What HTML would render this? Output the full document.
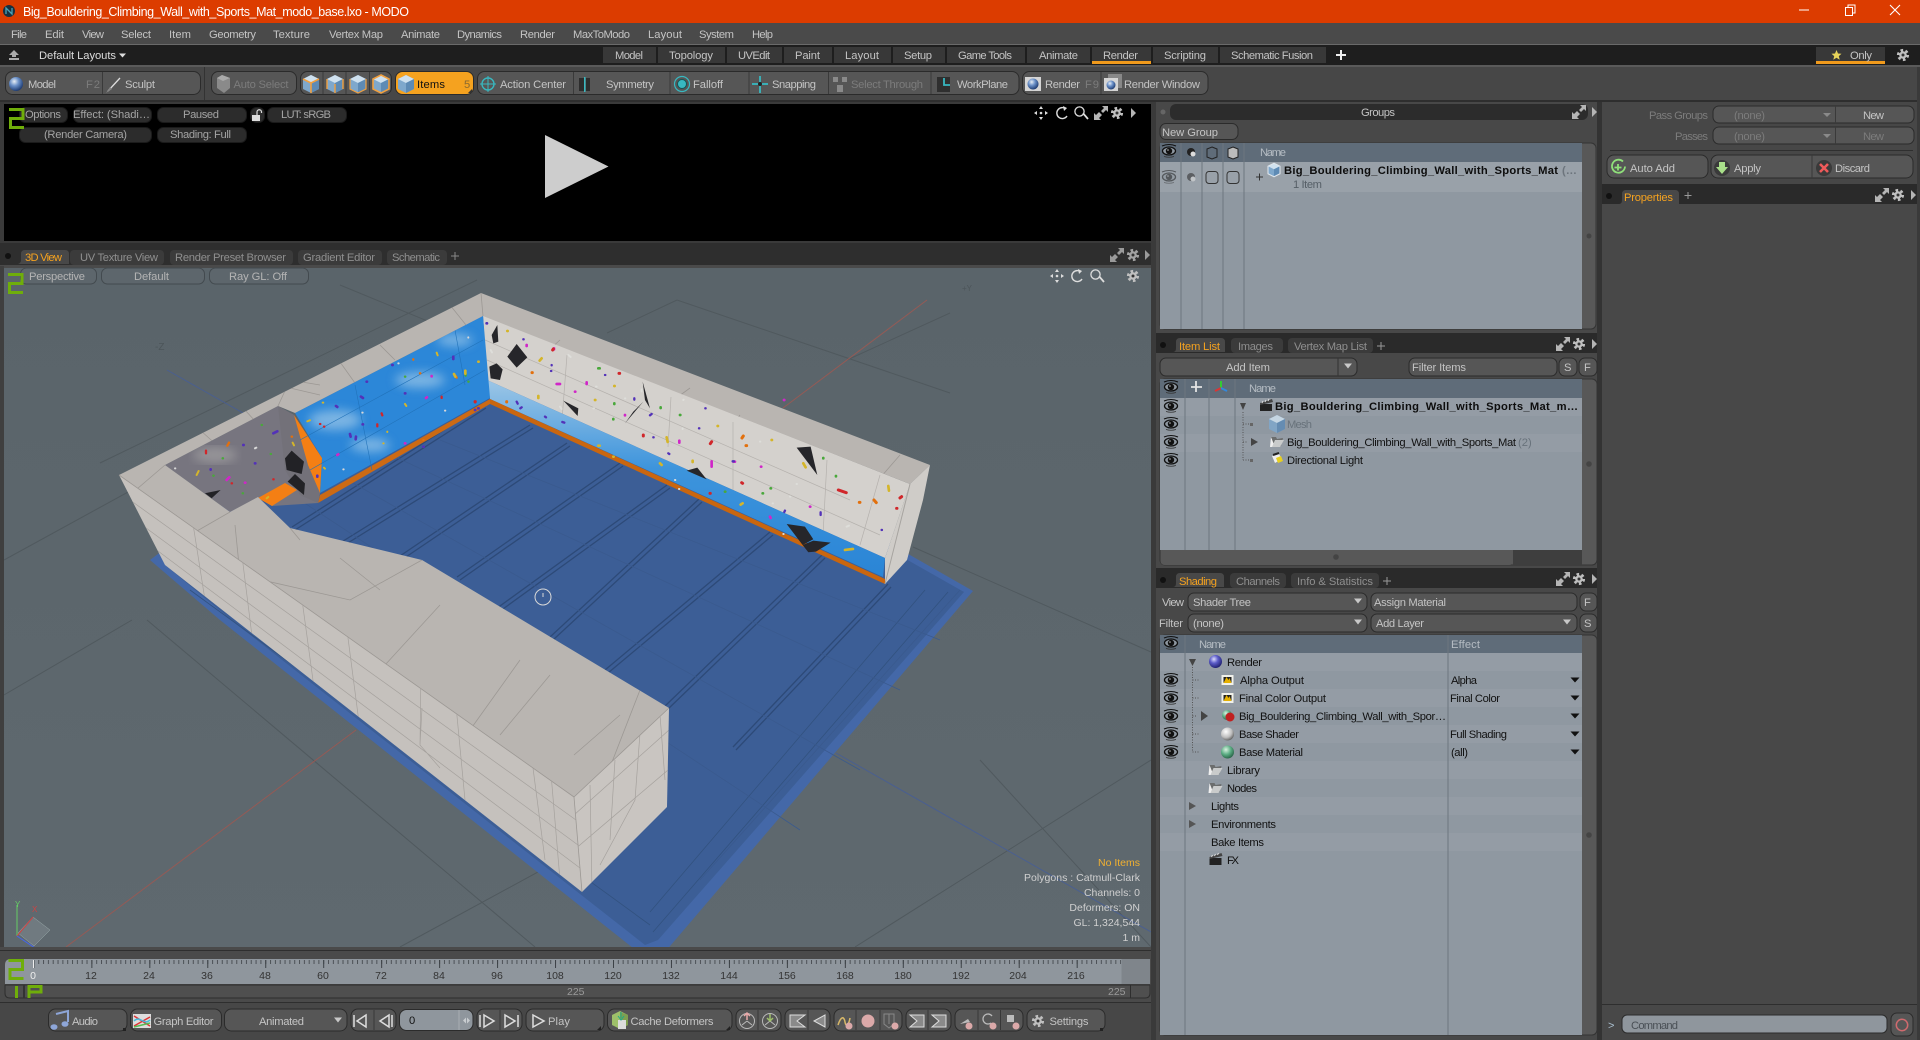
<!DOCTYPE html>
<html lang="en"><head><meta charset="utf-8"><title>Big_Bouldering_Climbing_Wall_with_Sports_Mat_modo_base.lxo - MODO</title>
<style>
html,body{margin:0;padding:0;background:#484848;overflow:hidden}
svg{display:block}
text{font-family:"Liberation Sans",sans-serif;font-size:11.2px;fill:#c4c4c4;white-space:pre}
.d{fill:#111}.g{fill:#8f8f8f}.h{fill:#7c7c7c}.o{fill:#f5a21f}.s{font-size:10.5px;fill:#d0d0d0}
.b{fill:#565656;stroke:#2b2b2b}.p{fill:#2c2c2c;stroke:#1b1b1b}.v{fill:#5d666c;stroke:#434a4f}
.tb{fill:#383838}.ln{stroke:#333;stroke-width:1}
</style></head><body>
<svg width="1920" height="1040" viewBox="0 0 1920 1040" xmlns="http://www.w3.org/2000/svg">
<defs>
<g id="eye"><ellipse rx="6.500" ry="4" fill="#8f98a1" stroke="#111" stroke-width="1.300"/><circle r="3.200" fill="#111"/><circle cx="-1" cy="-1" r=".8" fill="#bbb"/><path d="M-7-5q7-3 14 0" fill="none" stroke="#111"/><path d="M-5 5.500q5 1.500 10 0" fill="none" stroke="#333" stroke-width=".7"/></g>
<g id="gear"><circle r="3.800" fill="#c0c0c0"/><circle r="4.800" fill="none" stroke="#c0c0c0" stroke-width="2.600" stroke-dasharray="2.600 2.400"/><circle r="1.500" fill="#333"/></g>
<g id="exp"><path d="M-7 7v-7l2 2 3-3 3 3-3 3 2 2zM7-7v6l-2-2-3 3-2-2 3-3-2-2z" fill="#b5b5b5"/></g>
<path id="arr" d="M-2-5 3 0-2 5z" fill="#b5b5b5"/>
<g id="cube"><path d="M0-9 8-5V5L0 9-8 5V-5z" fill="#7fa8cc"/><path d="M0-9 8-5 0-1-8-5z" fill="#cfe1ef"/><path d="M0-1V9L8 5V-5z" fill="#5e8bb5"/></g>
<g id="cubeo"><use href="#cube"/><path d="M0-9 8-5V5L0 9-8 5V-5z" fill="none" stroke="#f0a040" stroke-width="1.600"/></g>
<g id="move"><path d="M0-7l2 3h-4zM0 7l2-3h-4zM-7 0l3-2v4zM7 0l-3-2v4z" fill="#ddd"/><circle r="1.300" fill="#ddd"/></g>
<g id="rot"><path d="M4-4A5.500 5.500 0 1 0 5 3" fill="none" stroke="#ddd" stroke-width="1.400"/><path d="M1-7l4 2-3 3z" fill="#ddd"/></g>
<g id="zm"><circle cx="-1.500" cy="-1.500" r="4.600" fill="none" stroke="#ddd" stroke-width="1.300"/><path d="M2 .2 7 6" stroke="#ddd" stroke-width="1.800"/></g>
<path id="two" d="M0 1.500H14V10.500H1.500V19.500H15" fill="none" stroke="#6fae0a" stroke-width="3"/>
<path id="dn" d="M-4-2.500H4L0 2.500z" fill="#c8c8c8"/>
<path id="dnk" d="M-4.500-2.500H4.500L0 2.500z" fill="#111"/>
<g id="folder"><path d="M-6-5h5l1 2 6-1-2 8H-6z" fill="#6b6d6d"/><path d="M-6-5-2 5H-7z" fill="#eee"/><path d="M-5 5-2-2H7L3 5z" fill="#c9cbcb"/></g>
<g id="clap"><rect x="-6" y="-2" width="12" height="7" fill="#222"/><path d="M-6-3 6-7 7-4-6-1z" fill="#444"/><path d="M-4-3-3-5M-1-4 0-6M2-5 3-7" stroke="#ddd"/></g>
<g id="film"><rect x="-6" y="-5" width="12" height="10" fill="#f1f1ea"/><rect x="-4" y="-3" width="8" height="6" fill="#222"/><path d="M-4 3-1-3 1 0 2-2 4 3z" fill="#e6b000"/></g>
<radialGradient id="sp" cx=".38" cy=".32" r=".7"><stop offset="0" stop-color="#e8eef5"/><stop offset=".45" stop-color="#6a90c8"/><stop offset="1" stop-color="#1d3a70"/></radialGradient>
<radialGradient id="spv" cx=".38" cy=".32" r=".7"><stop offset="0" stop-color="#dcdcff"/><stop offset=".45" stop-color="#5c5cc8"/><stop offset="1" stop-color="#202070"/></radialGradient>
<radialGradient id="spw" cx=".38" cy=".32" r=".75"><stop offset="0" stop-color="#fff"/><stop offset=".6" stop-color="#bdbdbd"/><stop offset="1" stop-color="#555"/></radialGradient>
<radialGradient id="spg" cx=".38" cy=".32" r=".75"><stop offset="0" stop-color="#d8f0e0"/><stop offset=".5" stop-color="#5cae84"/><stop offset="1" stop-color="#235a40"/></radialGradient>
<linearGradient id="bg3" x1="0" y1="0" x2="0" y2="1"><stop offset="0" stop-color="#5a646a"/><stop offset="1" stop-color="#5f696f"/></linearGradient>
<linearGradient id="strip" x1="0" y1="0" x2="0" y2="1"><stop offset="0" stop-color="#9cc6e6"/><stop offset=".45" stop-color="#3d94dc"/><stop offset="1" stop-color="#2a85d6"/></linearGradient>
<clipPath id="vp"><rect x="4" y="268" width="1147" height="679"/></clipPath>
<clipPath id="bw"><path d="M483 316 295 413 322 458 320 493 490 398z"/></clipPath>
<clipPath id="gw"><path d="M165 465 278 406 320 493 318 503 272 506 258 498 230 512z"/></clipPath>
<clipPath id="sd"><path d="M119 475 574 797 582 892 165 565z"/></clipPath>
<clipPath id="ef"><path d="M574 797 669 708 667 807 582 892z"/></clipPath>
<clipPath id="cp"><path d="M481 293 930 465 910 484 483 316 295 413 278 406 165 465 230 512 258 497 290 528 422 560 669 708 574 797 119 475z"/></clipPath>
<clipPath id="ww"><path d="M483 315 910 484 885 558 487 380z"/></clipPath>
<filter id="bl"><feGaussianBlur stdDeviation="5"/></filter>
<filter id="sf"><feGaussianBlur stdDeviation=".35"/></filter>
</defs>

<!-- base -->
<rect width="1920" height="1040" fill="#484848"/>
<!-- title bar -->
<rect width="1920" height="23" fill="#dc3c00"/>
<circle cx="9" cy="11" r="6" fill="#17303f"/><path d="M6 14V8l6 6V8" fill="none" stroke="#4aa3b8" stroke-width="1.300"/>
<text x="23" y="16" textLength="386" style="font-size:12.500px;fill:#fff">Big_Bouldering_Climbing_Wall_with_Sports_Mat_modo_base.lxo - MODO</text>
<path d="M1799 10h10" stroke="#fff"/><path d="M1845.500 7.500h7v8h-7zM1848 7.500v-2.500h7v8h-2.500" fill="none" stroke="#fff"/><path d="M1890 5l10 10M1900 5l-10 10" stroke="#fff" stroke-width="1.100"/>
<!-- menu -->
<rect y="23" width="1920" height="21" fill="#4a4a4a"/><rect y="44" width="1920" height="1" fill="#6a6a6a"/>
<g>
<text x="11" y="38" textLength="16">File</text><text x="45" y="38" textLength="19">Edit</text><text x="82" y="38" textLength="22">View</text><text x="121" y="38" textLength="30">Select</text><text x="169" y="38" textLength="22">Item</text><text x="209" y="38" textLength="47">Geometry</text><text x="273" y="38" textLength="37">Texture</text><text x="329" y="38" textLength="54">Vertex Map</text><text x="401" y="38" textLength="39">Animate</text><text x="457" y="38" textLength="45">Dynamics</text><text x="520" y="38" textLength="35">Render</text><text x="573" y="38" textLength="57">MaxToModo</text><text x="648" y="38" textLength="34">Layout</text><text x="699" y="38" textLength="35">System</text><text x="752" y="38" textLength="21">Help</text>
</g>
<!-- layout bar -->
<rect y="45" width="1920" height="20" fill="#1e1e1e"/><rect y="65" width="1920" height="2" fill="#5a5a5a"/>
<path d="M14 50l5 5h-3v2h-4v-2H9zM9 58h10v2H9z" fill="#aaa"/>
<text x="39" y="59" textLength="77" style="fill:#ddd">Default Layouts</text><path d="M119 53.500h7l-3.500 4z" fill="#ddd"/>
<g class="tb">
<rect x="603" y="47" width="53" height="16"/><rect x="658" y="47" width="67" height="16"/><rect x="727" y="47" width="55" height="16"/><rect x="784" y="47" width="48" height="16"/><rect x="834" y="47" width="57" height="16"/><rect x="893" y="47" width="52" height="16"/><rect x="947" y="47" width="78" height="16"/><rect x="1027" y="47" width="63" height="16"/><rect x="1092" y="47" width="59" height="16"/><rect x="1153" y="47" width="65" height="16"/><rect x="1220" y="47" width="106" height="16"/><rect x="1816" y="47" width="69" height="16"/>
</g>
<rect x="1092" y="61" width="59" height="3" fill="#f09a1c"/><rect x="1816" y="61" width="69" height="3" fill="#f09a1c"/>
<g>
<text x="615" y="59" textLength="28">Model</text><text x="669" y="59" textLength="44">Topology</text><text x="738" y="59" textLength="32">UVEdit</text><text x="795" y="59" textLength="25">Paint</text><text x="845" y="59" textLength="34">Layout</text><text x="904" y="59" textLength="28">Setup</text><text x="958" y="59" textLength="54">Game Tools</text><text x="1039" y="59" textLength="39">Animate</text><text x="1103" y="59" textLength="35">Render</text><text x="1164" y="59" textLength="42">Scripting</text><text x="1231" y="59" textLength="82">Schematic Fusion</text>
<text x="1850" y="59" textLength="22">Only</text>
</g>
<path d="M1341 50v10M1336 55h10" stroke="#eee" stroke-width="2"/>
<path d="M1836.500 50l1.500 3.500 3.500.300-2.700 2.300.9 3.600-3.200-2-3.200 2 .9-3.600-2.700-2.300 3.500-.300z" fill="#e6d35a"/>
<use href="#gear" x="1903" y="55"/>
<!-- toolbar -->
<rect y="67" width="1920" height="33" fill="#474747"/><rect y="100" width="1920" height="2" fill="#2e2e2e"/>
<rect x="204" y="67" width="1" height="33" fill="#333"/>
<rect class="b" x="5.500" y="71.500" width="195" height="23" rx="7"/>
<rect x="102" y="72" width="1" height="22" fill="#3a3a3a"/>
<circle cx="16" cy="84" r="7" fill="url(#sp)"/>
<text x="28" y="88" textLength="28">Model</text><text x="86" y="88" textLength="14" class="h">F2</text>
<path d="M108 91l12-13" stroke="#ddd" stroke-width="1.300"/><path d="M106 93l4-6 2 2z" fill="#888"/>
<text x="125" y="88" textLength="30">Sculpt</text>
<rect class="b" x="211.500" y="71.500" width="85" height="23" rx="7"/>
<path d="M222 75l8 3v10l-6 5-7-5V78z" fill="#8a8a8a"/><path d="M222 75l8 3-7 3-6-3z" fill="#aaa"/>
<text x="233.500" y="88" textLength="55" class="h">Auto Select</text>
<rect class="b" x="300.500" y="71.500" width="91" height="23" rx="7"/>
<path d="M323 72v22M346 72v22M369.500 72v22" stroke="#3a3a3a"/>
<use href="#cube" x="311" y="84"/><path d="M303 79l8 4 8-4M311 83v10" fill="none" stroke="#f0a040" stroke-width="1.600"/>
<use href="#cube" x="335" y="84"/><path d="M327 79v10M343 79v10M335 84v9" fill="none" stroke="#f0a040" stroke-width="1.400"/>
<use href="#cube" x="358" y="84"/><path d="M350 79v10l8 4 8-4V79" fill="none" stroke="#f0a040" stroke-width="1.200"/>
<use href="#cubeo" x="381" y="84"/>
<rect x="395.500" y="71.500" width="78" height="23" rx="7" fill="#f5a21f" stroke="#2b2b2b"/>
<use href="#cube" x="406" y="84"/>
<text x="417" y="88" textLength="28" class="d">Items</text><text x="464" y="88" textLength="6" style="fill:#8a6a30">5</text>
<path d="M472 93v-4l-4 4z" fill="#333"/>
<rect class="b" x="477.500" y="71.500" width="541.500" height="23" rx="7"/>
<path d="M573.500 72v22M670 72v22M749 72v22M828.500 72v22M931 72v22" stroke="#3a3a3a"/>
<circle cx="488" cy="84" r="6" fill="none" stroke="#38b8c0" stroke-width="1.400"/><path d="M488 76v16M480 84h16" stroke="#38b8c0"/>
<text x="500" y="88" textLength="66">Action Center</text>
<rect x="579" y="78" width="5" height="13" fill="#2d2d2d"/><rect x="584" y="77" width="1.500" height="15" fill="#38b8c0"/><rect x="586" y="78" width="4" height="13" fill="#2d2d2d"/>
<text x="606" y="88" textLength="48">Symmetry</text>
<circle cx="682" cy="84" r="7.500" fill="none" stroke="#38b8c0" stroke-width="1.200"/><circle cx="682" cy="84" r="4.500" fill="#38b8c0" stroke="#155" stroke-width="1"/>
<text x="693" y="88" textLength="30">Falloff</text>
<path d="M752 84h16" stroke="#38b8c0" stroke-width="1.800"/><path d="M760 76v17" stroke="#38b8c0" stroke-width="1.800"/><circle cx="760" cy="84" r="2" fill="#222"/>
<text x="772" y="88" textLength="44">Snapping</text>
<path d="M833 77h5v5h-5zM842 77h5v5h-5zM837 85h6v7h-6z" fill="#8a8a8a"/>
<text x="851" y="88" textLength="72" class="h">Select Through</text>
<rect x="937" y="77" width="13" height="15" fill="#2f2f2f"/><path d="M944 78v7h6" fill="none" stroke="#38b8c0" stroke-width="1.800"/>
<text x="957" y="88" textLength="51">WorkPlane</text>
<rect class="b" x="1022.500" y="71.500" width="185.500" height="23" rx="7"/>
<path d="M1101 72v22" stroke="#3a3a3a"/>
<rect x="1025" y="77" width="16" height="14" fill="#d5d5d5"/><circle cx="1033" cy="84" r="5.500" fill="url(#sp)"/>
<text x="1045" y="88" textLength="35">Render</text><text x="1085" y="88" textLength="14" class="h">F9</text>
<rect x="1108" y="74" width="14" height="14" fill="#888"/><rect x="1104" y="78" width="14" height="13" fill="#d5d5d5"/><circle cx="1111" cy="85" r="4.500" fill="url(#sp)"/>
<text x="1124" y="88" textLength="76">Render Window</text>

<!-- render preview -->
<rect x="0" y="102" width="1156" height="146" fill="#3a3a3a"/>
<rect x="4" y="104" width="1147" height="137" fill="#000"/>
<g>
<rect class="p" x="19.500" y="107.500" width="48" height="15" rx="6"/><rect class="p" x="73.500" y="107.500" width="78" height="15" rx="6"/><rect class="p" x="157.500" y="107.500" width="89" height="15" rx="6"/><rect class="p" x="250.500" y="107.500" width="14" height="15" rx="6"/><rect class="p" x="267.500" y="107.500" width="79" height="15" rx="6"/><rect class="p" x="19.500" y="127.500" width="132" height="15" rx="6"/><rect class="p" x="157.500" y="127.500" width="89" height="15" rx="6"/>
</g>
<path d="M252 115h8v6h-8z" fill="#ddd"/><path d="M257 115v-3a2.200 2.200 0 0 1 4.500 0v1" fill="none" stroke="#ddd" stroke-width="1.200"/>
<text x="25" y="118" textLength="36" style="fill:#a4a4a4">Options</text><text x="73" y="118" textLength="77" style="fill:#a4a4a4">Effect: (Shadi…</text><text x="183" y="118" textLength="36" style="fill:#a4a4a4">Paused</text><text x="281" y="118" textLength="50" style="fill:#a4a4a4">LUT: sRGB</text><text x="44" y="138" textLength="83" style="fill:#a4a4a4">(Render Camera)</text><text x="170" y="138" textLength="61" style="fill:#a4a4a4">Shading: Full</text>
<use href="#two" x="9" y="108"/>
<path d="M545 135 608.500 166.500 545 198z" fill="#cdcdcd"/>
<use href="#move" x="1041" y="113"/><use href="#rot" x="1062" y="113"/><use href="#zm" x="1081" y="113"/><use href="#exp" x="1101" y="113"/><use href="#gear" x="1117" y="113"/><use href="#arr" x="1133" y="113"/>

<!-- 3D tab bar -->
<rect x="0" y="243" width="1156" height="23" fill="#2e2e2e"/>
<circle cx="8" cy="256" r="3" fill="#111"/>
<path d="M18 264q3-1 3-4v-6q0-4 4-4h40q4 0 4 4v10z" fill="#484848"/>
<g fill="#3b3b3b"><rect x="70" y="250" width="94" height="15" rx="4"/><rect x="170" y="250" width="123" height="15" rx="4"/><rect x="298" y="250" width="84" height="15" rx="4"/><rect x="387" y="250" width="60" height="15" rx="4"/></g>
<text x="25" y="261" textLength="37" class="o">3D View</text><text x="80" y="261" textLength="78" class="g">UV Texture View</text><text x="175" y="261" textLength="111" class="g">Render Preset Browser</text><text x="303" y="261" textLength="72" class="g">Gradient Editor</text><text x="392" y="261" textLength="48" class="g">Schematic</text>
<path d="M455 252v8M451 256h8" stroke="#888"/>
<g opacity=".8"><use href="#exp" x="1117" y="255"/><use href="#gear" x="1133" y="255"/><use href="#arr" x="1147" y="255"/></g>
<rect x="0" y="265" width="1156" height="3" fill="#4a4a4a"/>

<!-- 3D viewport -->
<rect x="0" y="266" width="4" height="684" fill="#3f3f3f"/><rect x="1151" y="266" width="5" height="684" fill="#3f3f3f"/>
<g clip-path="url(#vp)">
<rect x="4" y="268" width="1147" height="679" fill="url(#bg3)"/>
<g stroke="#50595e" fill="none" stroke-width="1">
<path d="M100 463 477 280M147 620 535 947M132 620 4 695M677 300 950 393M607 333 677 300M913 547 1151 652M847 360 950 313M980 760 1151 947M340 285 600 392M4 560 150 480M400 947 560 860M855 947 1151 760"/>
</g>
<path d="M783 408 927 300M356 730 66 947" stroke="#955a55" fill="none"/>
<path d="M167 370 243 413M836 753 1151 932" stroke="#4a5f90" fill="none"/>
<text x="155" y="350" style="fill:#4c5559;font-size:10px">-Z</text>
<text x="962" y="291" style="fill:#4c5559;font-size:8px">+Y</text>

<!-- mat -->
<path d="M150 560 220 620 638 952H665L973 591 481 310z" fill="#4468a8"/>
<path d="M165 565 235 623 645 945 658 940 964 592 481 318z" fill="#3c5e96"/>
<path d="M190 590 650 925M948 592 653 932M925 590 650 912" stroke="#32527f" fill="none" stroke-width=".8"/>
<g stroke="#2d4a78" fill="none" stroke-width="1.300">
<path d="M292 527 483 405M295 530 486 408M340 543 530 425M343 546 533 428M397 558 567 443M400 561 570 446M457 577 620 463M460 580 623 466M482 619 667 485M485 622 670 488M550 637 699 499M553 640 702 502M605 670 770 532M608 673 773 535M664 707 822 555M667 710 825 558M733 747 888 584M736 750 891 587"/>
</g>
<g stroke="#3a5a8e" fill="none" stroke-width=".8"><path d="M330 470 860 770M300 500 800 830M380 450 900 690M440 440 940 640M700 880 960 590"/></g>

<!-- white wall -->
<path d="M483 315 910 484 885 558 487 380z" fill="#d4d1cd"/>
<path d="M487 380 885 558 883 577 490 399z" fill="url(#strip)"/>
<path d="M490 399 885 579 885 584 490 404z" fill="#c9660f"/>
<!-- blue wall -->
<path d="M483 316 295 413 322 458 320 493 490 398z" fill="#2c87d8"/>
<g clip-path="url(#bw)" filter="url(#bl)" fill="#8fc0e6" opacity=".8"><ellipse cx="335" cy="420" rx="26" ry="10"/><ellipse cx="420" cy="380" rx="25" ry="8"/><ellipse cx="370" cy="445" rx="20" ry="7"/><ellipse cx="455" cy="340" rx="18" ry="6"/></g>
<path d="M490 399 320 495 318 503 490 404z" fill="#cc6a14"/>
<!-- gray wall -->
<path d="M165 465 278 406 294 415 320 493 318 503 272 506 258 498 230 512z" fill="#77757f"/>
<g clip-path="url(#gw)" filter="url(#bl)" fill="#9e9c9f" opacity=".8"><ellipse cx="215" cy="455" rx="22" ry="8"/></g>
<path d="M258 498 285 483 297 490 272 506z" fill="#f47f14"/>
<path d="M294 415 320 493 318 503 300 495 285 470 278 406z" fill="#737179"/>
<path d="M294 415 322 458 320 493 308 465z" fill="#f47f14"/>

<!-- wire lines on walls -->
<g stroke="#9b9894" fill="none" stroke-width=".7" opacity=".55" clip-path="url(#ww)">
<path d="M567 355 562 420M671 397 668 447M733 422 733 502M827 460 823 535M880 475 860 545M485 340 850 500M487 360 880 535"/>
</g>
<g stroke="#2172b9" fill="none" stroke-width=".6"><path d="M300 440 483 340M310 470 485 370M455 330 465 385M355 385 372 470"/></g>

<!-- holds: crop 8 -->
<g transform="translate(100 280) scale(.3333)" fill="none" stroke-linecap="round" filter="url(#sf)">
<path d="M622 424l8-3M668 368h2M915 372l4 6M1010 218l3 8M862 455v1M850 490h1M672 563l3 3M578 488l4 8M290 585l6-12M500 655l5-4" stroke="#d4b52a" stroke-width="6"/>
<path d="M708 378l4 3M783 350l6 4M788 433h1M750 462l2 8M768 470l-1 8M877 255h1M800 305h1M1060 230v7M1125 390h1M1160 130h1M652 587v3M915 340h1M520 460l12-6M332 568v1M465 550h1M430 495h1M970 500h1M1135 385h1" stroke="#5230b8" stroke-width="8"/>
<path d="M845 400l2 6M832 433v6M1025 350v4M1125 367h1M318 512v8M520 598h1M660 432h1M672 440h1M395 610h1" stroke="#d0282c" stroke-width="7"/>
<path d="M712 525l3-2M978 354l3-2M995 288v1M380 600l8-8M435 608h1M915 490h1" stroke="#d028c8" stroke-width="8"/>
<path d="M940 238v1M1067 288l3 5M960 280h1M382 497l5-9M970 480h1M575 470h1" stroke="#e26f10" stroke-width="7"/>
<path d="M1097 280v7M485 435h1M368 535h1M340 587h1M428 640h1M512 522h1M915 290h1M1105 305h1" stroke="#48a83a" stroke-width="7"/>
<path d="M1105 172v1M730 568h1M465 505l4-2M225 565h1M787 398h1M895 250h1M1035 392h1" stroke="#d8d8d8" stroke-width="6"/>
<path d="M555 535 575 512 612 545 605 582 560 570zM563 605 585 582 615 610 612 645zM315 640 362 630 335 655z" fill="#232326"/>
</g>
<!-- holds: crop 9 -->
<g transform="translate(450 300) scale(.3333)" fill="none" stroke-linecap="round" filter="url(#sf)">
<path d="M200 132 232 172 200 203 172 170zM125 105 142 75 145 125 130 130zM118 200 140 190 158 208 150 240 122 235zM340 302 385 325 383 348zM578 245 600 325 585 300zM580 305 525 370 550 335zM1040 443 1082 440 1102 525zM710 512 742 503 770 538zM1010 672 1065 680 1090 718 1058 735zM1058 735 1090 722 1142 728 1098 755 1075 757z" fill="#28282a"/>
<path d="M172 93h1M275 175l-6 7M265 288v6M493 258h1M728 486v-4M650 412l3 14M803 378h1M965 420h1M1060 490l7 12M1315 558l2 14M490 470h1M630 490l5 5M878 610l-6 4M1185 750l24-3M445 437h4M435 300h1M12 222l4 8M46 212v9M85 185h1" stroke="#d4b52a" stroke-width="8"/>
<path d="M230 135v3M312 145v3M410 247v5M320 252h10M785 484v16M850 485h5M688 422v6M375 275h1M933 500h1M960 650l2 4M1002 300h1M1080 620h1M525 345v1" stroke="#d028c8" stroke-width="8"/>
<path d="M110 70h1M220 118h1M305 195v1M303 213h1M465 225h1M553 295v4M605 342l-5 4M766 325h1M747 385h1M610 412h1M1005 632l-2 4M1112 637v8M1295 690h1M337 366l6 2M285 350l3 2M215 322l-4 3M200 305l3 6M655 460l3 2M848 484h4" stroke="#5230b8" stroke-width="7"/>
<path d="M310 147l-2 3M507 220h2M580 405v3M785 425l-4 6M875 548l3 2M1165 570l24 8M1355 590l-5 4M780 580h1M1340 625h1M75 305h1" stroke="#d0282c" stroke-width="9"/>
<path d="M246 218h1M880 408l-4 6M888 437h2M1228 607h2M1272 600l7 8M170 305v1" stroke="#e26f10" stroke-width="9"/>
<path d="M445 205h4M632 322v2M493 310v2M490 357v1M690 345h1M1120 474v1M1158 528v1M962 565h1M938 580h1M825 575h1" stroke="#48a83a" stroke-width="8"/>
<path d="M122 150l4 7M355 165l7 6M330 320l5 7M438 260h2M525 295h1M575 268v6M700 300l1-1M698 385v2M930 425h1M1040 552h1M1020 590h1M968 610h1M1190 680l7-3M675 540h1M687 567h1M430 325h2M1000 702h1" stroke="#dededa" stroke-width="6"/>
</g>

<!-- cap -->
<path d="M481 293 930 465 910 484 483 316 295 413 278 406 165 465 230 512 258 497 290 528 422 560 669 708 574 797 119 475z" fill="#b9b5b1"/>
<!-- near side face -->
<path d="M119 475 574 797 582 892 165 565z" fill="#c5c1bd"/>
<path d="M574 797 669 708 667 807 582 892z" fill="#c9c5c1"/>
<path d="M930 465 910 484 885 558 885 584 907 560 923 500z" fill="#cfccc8"/>
<path d="M910 484 885 584" stroke="#a6a39f" fill="none"/>
<!-- cap wire -->
<g stroke="#9c9894" fill="none" stroke-width=".8" clip-path="url(#cp)">
<path d="M165 465 130 495 190 535 230 512M481 293 483 316M450 305 470 330M380 345 395 360M340 362 355 383M290 388 320 395M278 406 290 380 320 385M200 430 220 448M245 410 265 432M190 530 240 575 350 600 422 560M235 525 240 575M290 528 300 540M340 558 380 590M550 675 500 735M620 715 574 755M640 690 605 780M520 660 470 730M440 605 385 665M450 395 470 410M560 340 540 358M690 388 660 410M740 415 730 428M900 455 880 478 885 482"/>
</g>
<path d="M119 475 574 797M574 797 669 708M574 797 582 892" stroke="#9c9894" fill="none" stroke-width=".8"/>
<g stroke="#a5a19d" fill="none" stroke-width=".7" clip-path="url(#sd)">
<path d="M130 500 576 820M142 525 578 845M150 545 580 868M190 505 205 600M240 540 255 660M300 585 315 695M345 615 360 730M421 668 420 745M422 708 420 745 440 768M455 695 465 800M530 745 545 860M550 762 560 880"/>
</g>
<g stroke="#a5a19d" fill="none" stroke-width=".7" clip-path="url(#ef)">
<path d="M615 760 610 840M640 733 635 800 600 865M660 715 665 780M590 785 592 890M574 815 669 730M574 850 668 770"/>
</g>
<!-- cursor -->
<g fill="none" stroke="#d8d8d8"><circle cx="543" cy="597" r="8"/><path d="M543 593v4"/></g>
<!-- axes widget -->
<path d="M33 917 50 930 34 946 18 933z" fill="#707a80" stroke="#9aa" stroke-width=".5"/>
<path d="M17 905V936" stroke="#6c6"/><path d="M17 936 33 917" stroke="#c44"/><path d="M17 936 35 948" stroke="#46e"/>
<text x="15" y="907" style="font-size:8px;fill:#6c6">Y</text><text x="32" y="912" style="font-size:8px;fill:#c44">X</text>
<!-- stats -->
<text x="1140" y="866" text-anchor="end" class="s" style="fill:#f0b030">No Items</text>
<text x="1140" y="881" text-anchor="end" class="s" textLength="116">Polygons : Catmull-Clark</text>
<text x="1140" y="896" text-anchor="end" class="s">Channels: 0</text>
<text x="1140" y="911" text-anchor="end" class="s">Deformers: ON</text>
<text x="1140" y="926" text-anchor="end" class="s">GL: 1,324,544</text>
<text x="1140" y="941" text-anchor="end" class="s">1 m</text>
</g>
<!-- viewport pills -->
<rect class="v" x="20.500" y="268" width="76" height="16" rx="6"/><rect class="v" x="101.500" y="268" width="103" height="16" rx="6"/><rect class="v" x="209.500" y="268" width="99" height="16" rx="6"/>
<text x="29" y="280" textLength="56" style="fill:#b4b4b4">Perspective</text><text x="134" y="280" textLength="35" style="fill:#b4b4b4">Default</text><text x="229" y="280" textLength="58" style="fill:#b4b4b4">Ray GL: Off</text>
<use href="#two" x="8" y="273"/>
<use href="#move" x="1057" y="276"/><use href="#rot" x="1077" y="276"/><use href="#zm" x="1097" y="276"/><use href="#gear" x="1133" y="276"/>

<!-- timeline -->
<rect x="0" y="947" width="1156" height="56" fill="#4a4a4a"/><rect x="0" y="950" width="1156" height="1" fill="#2e2e2e"/>
<path d="M5 984V965q0-6 6-6H1144q6 0 6 6v19z" fill="#8f969d"/>
<rect x="1121.500" y="959" width="28.500" height="25" fill="#7f858b"/>
<path d="M5 985H1150V993q0 5-5 5H10q-5 0-5-5z" fill="#4f4f4f" stroke="#2e2e2e"/>
<defs><pattern id="tk" x="33.400" y="960" width="4.830" height="5" patternUnits="userSpaceOnUse"><rect width="1" height="4" fill="#4c5156"/></pattern>
<pattern id="tk2" x="33.400" y="960" width="57.960" height="10" patternUnits="userSpaceOnUse"><rect width="1" height="8" fill="#3c4146"/></pattern></defs>
<rect x="33" y="960" width="1088" height="5" fill="url(#tk)"/><rect x="33" y="960" width="1088" height="8.500" fill="url(#tk2)"/>
<rect x="33" y="960" width="1" height="8" fill="#eee"/>
<text x="33" y="979" text-anchor="middle" style="fill:#eee;font-size:10.500px">0</text>
<g><text x="91" y="979" text-anchor="middle" style="fill:#333;font-size:10.500px">12</text><text x="149" y="979" text-anchor="middle" style="fill:#333;font-size:10.500px">24</text><text x="207" y="979" text-anchor="middle" style="fill:#333;font-size:10.500px">36</text><text x="265" y="979" text-anchor="middle" style="fill:#333;font-size:10.500px">48</text><text x="323" y="979" text-anchor="middle" style="fill:#333;font-size:10.500px">60</text><text x="381" y="979" text-anchor="middle" style="fill:#333;font-size:10.500px">72</text><text x="439" y="979" text-anchor="middle" style="fill:#333;font-size:10.500px">84</text><text x="497" y="979" text-anchor="middle" style="fill:#333;font-size:10.500px">96</text><text x="555" y="979" text-anchor="middle" style="fill:#333;font-size:10.500px">108</text><text x="613" y="979" text-anchor="middle" style="fill:#333;font-size:10.500px">120</text><text x="671" y="979" text-anchor="middle" style="fill:#333;font-size:10.500px">132</text><text x="729" y="979" text-anchor="middle" style="fill:#333;font-size:10.500px">144</text><text x="787" y="979" text-anchor="middle" style="fill:#333;font-size:10.500px">156</text><text x="845" y="979" text-anchor="middle" style="fill:#333;font-size:10.500px">168</text><text x="903" y="979" text-anchor="middle" style="fill:#333;font-size:10.500px">180</text><text x="961" y="979" text-anchor="middle" style="fill:#333;font-size:10.500px">192</text><text x="1018" y="979" text-anchor="middle" style="fill:#333;font-size:10.500px">204</text><text x="1076" y="979" text-anchor="middle" style="fill:#333;font-size:10.500px">216</text></g>
<text x="567" y="995" style="fill:#9a9a9a;font-size:10.500px">225</text><text x="1108" y="995" style="fill:#9a9a9a;font-size:10.500px">225</text>
<path d="M1130.500 985v13" stroke="#2e2e2e"/>
<use href="#two" x="8.500" y="959"/>
<path d="M16.500 986v12" stroke="#6fae0a" stroke-width="3"/><path d="M29 998V986.500H41V992H29" fill="none" stroke="#6fae0a" stroke-width="3"/>
<path d="M24 985v13" stroke="#333" stroke-width="2"/>

<!-- bottom toolbar -->
<rect x="0" y="1003" width="1156" height="37" fill="#474747"/><rect x="0" y="1002" width="1156" height="1" fill="#2e2e2e"/>
<g>
<rect class="b" x="48.500" y="1009" width="78.500" height="22" rx="7"/><rect class="b" x="130.500" y="1009" width="91" height="22" rx="7"/><rect class="b" x="224.500" y="1009" width="122.500" height="22" rx="7"/><rect class="b" x="351" y="1009" width="45" height="22" rx="7"/><rect class="b" x="477" y="1009" width="45" height="22" rx="7"/><rect class="b" x="526" y="1009" width="78" height="22" rx="7"/><rect class="b" x="607.500" y="1009" width="124.500" height="22" rx="7"/><rect class="b" x="736" y="1009" width="45" height="22" rx="7"/><rect class="b" x="785" y="1009" width="45" height="22" rx="7"/><rect class="b" x="834" y="1009" width="68" height="22" rx="7"/><rect class="b" x="906" y="1009" width="45" height="22" rx="7"/><rect class="b" x="955" y="1009" width="68" height="22" rx="7"/><rect class="b" x="1027" y="1009" width="78" height="22" rx="7"/>
</g>
<rect x="399.500" y="1009.500" width="73.500" height="21" rx="7" fill="#8f969d" stroke="#2b2b2b"/>
<path d="M374 1010v20M500 1010v20M758 1010v20M808 1010v20M856 1010v20M880 1010v20M928 1010v20M978 1010v20M1000.500 1010v20" stroke="#383838"/><path d="M459 1010v20" stroke="#a8aeb4"/>
<!-- bottom icons -->
<path d="M56 1014l12-3v11" fill="none" stroke="#8ea6d8" stroke-width="2"/><ellipse cx="54" cy="1027" rx="3.500" ry="2.800" fill="#8ea6d8"/><ellipse cx="65" cy="1024" rx="3.500" ry="2.800" fill="#8ea6d8"/>
<rect x="133" y="1014" width="18" height="14" fill="#ddd"/><path d="M134 1016l16 10M134 1026l16-9" stroke="#d33" stroke-width="1.500"/><path d="M134 1021c6-6 10 5 16-1" stroke="#4bd" stroke-width="1.500" fill="none"/><path d="M134 1027l16-4" stroke="#5b5" stroke-width="1.500"/>
<path d="M354 1015v12M366 1015l-9 6 9 6z" fill="none" stroke="#ddd" stroke-width="1.500"/><path d="M389 1015l-9 6 9 6zM392 1015v12" fill="none" stroke="#ddd" stroke-width="1.500"/>
<path d="M463 1020.500l3-3v6zM470 1020.500l-3-3v6z" fill="#c8ccd0"/>
<path d="M480 1015v12M484 1015l10 6-10 6z" fill="none" stroke="#ddd" stroke-width="1.500"/><path d="M505 1015l10 6-10 6zM518 1015v12" fill="none" stroke="#ddd" stroke-width="1.500"/>
<path d="M533 1015l11 6-11 6z" fill="none" stroke="#ddd" stroke-width="1.500"/>
<path d="M612 1015l8-4 8 4v10l-8 4-8-4z" fill="#9ec06a"/><path d="M620 1012l8 3v10l-8 4z" fill="#7f9f50"/><rect x="618" y="1020" width="8" height="9" fill="#ddd"/><path d="M621 1012v6M618 1016l3 4 3-4" stroke="#2a8" fill="none"/>
<g fill="none" stroke="#bbb"><circle cx="747" cy="1021" r="7.500"/><circle cx="770" cy="1021" r="7.500"/><path d="M747 1021l-5 4M747 1021l5 4M770 1021l-5 4M770 1021l5 4"/></g>
<path d="M747 1020v-7M744 1016l3-3 3 3" stroke="#e9a9a9" fill="none" stroke-width="1.500"/><path d="M770 1014v7M767 1018l3 3 3-3" stroke="#9ec06a" fill="none" stroke-width="1.500"/>
<g fill="#8a8a8a" stroke="#ddd"><path d="M790 1015v12h15l-8-6 8-6z"/><path d="M814 1021l11-6v12z"/><path d="M910 1015h14l-7 6 7 6h-14z" transform="matrix(-1 0 0 1 1834 0)"/><path d="M932 1015h14l-7 6 7 6h-14z" transform="matrix(-1 0 0 1 1878 0)"/></g>
<path d="M838 1025c3-9 6-9 7-3s4 2 5-4" fill="none" stroke="#d8b868" stroke-width="1.500"/>
<circle cx="849" cy="1026" r="3.500" fill="#dba9a9"/><circle cx="868" cy="1021" r="6.500" fill="#dba9a9"/>
<path d="M884 1014h10v10l-5 4-5-4zM889 1014v10" fill="none" stroke="#888"/><circle cx="895" cy="1026" r="3.500" fill="#dba9a9"/>
<path d="M960 1024l8-5 2 3z" fill="#bbb"/><circle cx="969" cy="1026" r="3.500" fill="#dba9a9"/>
<path d="M992 1016a5 5 0 1 0-1 7" fill="none" stroke="#bbb" stroke-width="1.300"/><circle cx="993" cy="1026" r="3.500" fill="#dba9a9"/>
<rect x="1007" y="1015" width="7" height="7" fill="#bbb"/><circle cx="1016" cy="1026" r="3.500" fill="#dba9a9"/>
<use href="#gear" x="1038" y="1021"/>
<text x="72" y="1025" textLength="26">Audio</text><text x="153.500" y="1025" textLength="60">Graph Editor</text><text x="259" y="1025" textLength="45">Animated</text><use href="#dn" x="338" y="1020"/>
<text x="409" y="1024" class="d" textLength="6">0</text><text x="548" y="1025" textLength="22">Play</text><text x="630.500" y="1025" textLength="83">Cache Deformers</text><text x="1049.500" y="1025" textLength="39">Settings</text>
<path d="M126 1031v-3h-3v3zM730 1030v-4l-4 4zM601 1030v-4l-4 4zM1103 1031v-3h-3v3z" fill="#222"/>

<!-- middle column -->
<rect x="1156" y="102" width="444" height="938" fill="#484848"/>
<rect x="1151" y="102" width="5" height="938" fill="#3a3a3a"/>
<rect x="1597" y="102" width="5" height="938" fill="#333"/>
<!-- groups -->
<circle cx="1163" cy="112" r="2.500" fill="#666"/>
<rect x="1170" y="104" width="418" height="16" rx="6" fill="#2c2c2c"/>
<text x="1361" y="116" textLength="34">Groups</text>
<use href="#exp" x="1579" y="112"/><use href="#arr" x="1594" y="112"/>
<rect class="b" x="1160" y="123.500" width="78" height="16" rx="6"/><text x="1162" y="136" textLength="56">New Group</text>
<rect x="1160" y="143" width="436" height="186" rx="5" fill="#585858" stroke="#333"/>
<rect x="1160" y="143" width="422" height="19" fill="#5f6c79"/>
<rect x="1160" y="162" width="422" height="167" fill="#8f98a1"/>
<rect x="1160" y="162" width="422" height="30" fill="#99a1a9"/>
<path d="M1181 143v186M1202 143v186M1223 143v186M1244 143v186" stroke="#6d7680"/>
<use href="#eye" x="1169" y="151"/>
<g transform="translate(1191 152)"><circle r="4" fill="#222"/><circle cx="2" cy="2" r="2.500" fill="#ddd"/></g>
<path d="M1212 147l5 2v8l-5 2-5-2v-8z" fill="none" stroke="#222"/>
<path d="M1233 147l5 2v8l-5 2-5-2v-8z" fill="#bbb" stroke="#222"/>
<use href="#eye" x="1169" y="177" opacity=".5"/>
<g transform="translate(1191 177)" opacity=".6"><circle r="4" fill="#333"/><circle cx="2" cy="2" r="2.500" fill="#ddd"/></g>
<rect x="1206" y="171.500" width="12" height="12" rx="3" fill="none" stroke="#333"/><rect x="1227" y="171.500" width="12" height="12" rx="3" fill="none" stroke="#333"/>
<path d="M1256 177h7M1259.500 173.500v7" stroke="#333"/>
<text x="1260" y="156" textLength="26" style="fill:#b5bcc3">Name</text>
<g transform="translate(1274 170) scale(.75)"><use href="#cube"/><path d="M0-9 8-5V5L0 9-8 5V-5z" fill="none" stroke="#dfe6ec" stroke-width="1.400"/></g>
<text x="1284" y="174" textLength="274" style="font-weight:bold;fill:#0d0d0d;font-size:11.200px">Big_Bouldering_Climbing_Wall_with_Sports_Mat</text><text x="1562" y="174" style="fill:#6c747c;font-weight:bold">(…</text>
<text x="1293" y="188" textLength="29" style="fill:#555e66">1 Item</text>
<circle cx="1589" cy="236" r="2.500" fill="#444"/>

<!-- item list -->
<rect x="1156" y="333" width="441" height="20" fill="#2a2a2a"/>
<circle cx="1163" cy="345" r="3" fill="#111"/>
<path d="M1173 352q3 0 3-4v-6q0-4 4-4h41q4 0 4 4v10z" fill="#484848"/>
<rect x="1231" y="338" width="52" height="15" rx="4" fill="#3b3b3b"/><rect x="1288" y="338" width="85" height="15" rx="4" fill="#3b3b3b"/>
<text x="1179" y="350" class="o" textLength="41">Item List</text><text x="1238" y="350" class="g" textLength="35">Images</text><text x="1294" y="350" class="g" textLength="73">Vertex Map List</text>
<path d="M1381 342v8M1377 346h8" stroke="#999"/>
<use href="#exp" x="1563" y="344"/><use href="#gear" x="1579" y="344"/><use href="#arr" x="1594" y="344"/>
<rect class="b" x="1160" y="358" width="197" height="18" rx="6"/><path d="M1338 358v18" stroke="#333"/><text x="1226" y="371" textLength="44">Add Item</text><use href="#dn" x="1348" y="366"/>
<rect class="b" x="1409" y="358" width="148" height="18" rx="6"/><text x="1412" y="371" textLength="54">Filter Items</text>
<rect class="b" x="1559" y="358" width="18" height="18" rx="6"/><text x="1564" y="371">S</text><rect class="b" x="1579" y="358" width="18" height="18" rx="6"/><text x="1584" y="371">F</text>
<rect x="1160" y="379" width="437" height="186" rx="5" fill="#585858" stroke="#333"/>
<rect x="1160" y="379" width="422" height="19" fill="#5f6c79"/>
<rect x="1160" y="398" width="422" height="152" fill="#8f98a1"/>
<rect x="1160" y="398" width="422" height="18" fill="#949ca5"/><rect x="1160" y="434" width="422" height="18" fill="#949ca5"/>
<path d="M1185 379v171M1209 379v171M1235 379v171" stroke="#6d7680"/>
<rect x="1160.500" y="550" width="353" height="15" rx="4" fill="#585858"/><rect x="1513" y="550" width="69" height="15" fill="#3e3e3e"/>
<circle cx="1336" cy="557" r="2.800" fill="#444"/><circle cx="1589" cy="464" r="2.800" fill="#444"/>
<text x="1249" y="392" textLength="27" style="fill:#b5bcc3">Name</text>
<use href="#eye" x="1171" y="387"/><use href="#eye" x="1171" y="406"/><use href="#eye" x="1171" y="424"/><use href="#eye" x="1171" y="442"/><use href="#eye" x="1171" y="460"/>
<path d="M1191 387h11M1196 381v11" stroke="#e4e4e4" stroke-width="1.800"/>
<path d="M1221 381v7" stroke="#3c3" stroke-width="2"/><path d="M1221 388l-6 3" stroke="#d33" stroke-width="2"/><path d="M1221 388l6 3" stroke="#38d" stroke-width="2"/>
<path d="M1240 403h6l-3 7z" fill="#444"/>
<path d="M1243 412V460M1243 424h7M1243 442h5M1243 460h7" stroke="#555" stroke-dasharray="1 1.500" fill="none"/>
<rect x="1250" y="423" width="3" height="3" fill="#666"/><rect x="1250" y="459" width="3" height="3" fill="#666"/>
<path d="M1251 438l7 4-7 4z" fill="#444"/>
<use href="#clap" x="1266" y="406"/>
<use href="#cube" x="1277" y="424" opacity=".85"/><use href="#folder" x="1277" y="442"/>
<path d="M1272 456l7-2 3 5-7 4z" fill="#eee"/><path d="M1276 458l5-2 2 5-5 2z" fill="#e8d020"/><path d="M1273 455l6-2" stroke="#222" stroke-width="2"/>
<text x="1275" y="410" textLength="303" style="font-weight:bold;fill:#0d0d0d">Big_Bouldering_Climbing_Wall_with_Sports_Mat_m…</text>
<text x="1287" y="428" textLength="25" style="fill:#68727b">Mesh</text>
<text x="1287" y="446" textLength="229" class="d">Big_Bouldering_Climbing_Wall_with_Sports_Mat</text><text x="1518" y="446" style="fill:#68727b">(2)</text>
<text x="1287" y="464" textLength="76" class="d">Directional Light</text>

<!-- shading -->
<rect x="1156" y="568" width="441" height="20" fill="#2a2a2a"/>
<circle cx="1163" cy="580" r="3" fill="#111"/>
<path d="M1173 587q3 0 3-4v-6q0-4 4-4h40q4 0 4 4v10z" fill="#484848"/>
<rect x="1230" y="573" width="56" height="15" rx="4" fill="#3b3b3b"/><rect x="1291" y="573" width="88" height="15" rx="4" fill="#3b3b3b"/>
<text x="1179" y="585" class="o" textLength="38">Shading</text><text x="1236" y="585" class="g" textLength="44">Channels</text><text x="1297" y="585" class="g" textLength="76">Info &amp; Statistics</text>
<path d="M1387 577v8M1383 581h8" stroke="#999"/>
<use href="#exp" x="1563" y="579"/><use href="#gear" x="1579" y="579"/><use href="#arr" x="1594" y="579"/>
<text x="1162" y="606" textLength="22">View</text><text x="1159" y="627" textLength="24">Filter</text>
<rect class="b" x="1188" y="593" width="179" height="18" rx="6"/><text x="1193" y="606" textLength="58">Shader Tree</text><use href="#dn" x="1358" y="601"/>
<rect class="b" x="1371" y="593" width="206" height="18" rx="6"/><text x="1374" y="606" textLength="72">Assign Material</text>
<rect class="b" x="1580" y="593" width="17" height="18" rx="6"/><text x="1584" y="606">F</text>
<rect class="b" x="1188" y="614" width="179" height="18" rx="6"/><text x="1193" y="627" textLength="31">(none)</text><use href="#dn" x="1358" y="622"/>
<rect class="b" x="1371" y="614" width="206" height="18" rx="6"/><text x="1376" y="627" textLength="48">Add Layer</text><use href="#dn" x="1567" y="622"/>
<rect class="b" x="1580" y="614" width="17" height="18" rx="6"/><text x="1584" y="627">S</text>
<rect x="1160" y="635" width="437" height="400" rx="5" fill="#585858" stroke="#333"/>
<rect x="1160" y="635" width="422" height="18" fill="#5f6c79"/>
<rect x="1160" y="653" width="422" height="382" fill="#8f98a1"/>
<g fill="#949ca5"><rect x="1160" y="653" width="422" height="18"/><rect x="1160" y="689" width="422" height="18"/><rect x="1160" y="725" width="422" height="18"/><rect x="1160" y="761" width="422" height="18"/><rect x="1160" y="797" width="422" height="18"/><rect x="1160" y="833" width="422" height="18"/></g>
<path d="M1185 635v400M1448 635v400" stroke="#6d7680"/>
<circle cx="1589" cy="835" r="2.800" fill="#444"/>
<text x="1199" y="648" textLength="27" style="fill:#b5bcc3">Name</text><text x="1451" y="648" textLength="29" style="fill:#b5bcc3">Effect</text>
<use href="#eye" x="1171" y="643"/><use href="#eye" x="1171" y="680"/><use href="#eye" x="1171" y="698"/><use href="#eye" x="1171" y="716"/><use href="#eye" x="1171" y="734"/><use href="#eye" x="1171" y="752"/>
<path d="M1189 659h7l-3.500 7z" fill="#444"/>
<path d="M1192.500 667V752M1192.500 680h7M1192.500 698h7M1192.500 716h5M1192.500 734h7M1192.500 752h7" stroke="#555" stroke-dasharray="1 1.500" fill="none"/>
<path d="M1201 711l7 5-7 5z" fill="#444"/>
<path d="M1189 802l7 4-7 4zM1189 820l7 4-7 4z" fill="#555"/>
<circle cx="1215.500" cy="661.500" r="6.500" fill="url(#spv)"/>
<use href="#film" x="1227.500" y="680"/><use href="#film" x="1227.500" y="698"/>
<circle cx="1227" cy="715" r="5" fill="url(#spg)"/><circle cx="1230" cy="717" r="4.500" fill="#c02020"/>
<circle cx="1227.500" cy="734" r="6.500" fill="url(#spw)"/><circle cx="1227.500" cy="752" r="6.500" fill="url(#spg)"/>
<use href="#folder" x="1215.500" y="770"/><use href="#folder" x="1215.500" y="788"/><use href="#clap" x="1215.500" y="860"/>
<text x="1227" y="666" textLength="35" class="d">Render</text><text x="1240" y="684" textLength="64" class="d">Alpha Output</text><text x="1239" y="702" textLength="87" class="d">Final Color Output</text><text x="1239" y="720" textLength="207" class="d">Big_Bouldering_Climbing_Wall_with_Spor…</text><text x="1239" y="738" textLength="60" class="d">Base Shader</text><text x="1239" y="756" textLength="64" class="d">Base Material</text><text x="1227" y="774" textLength="33" class="d">Library</text><text x="1227" y="792" textLength="30" class="d">Nodes</text><text x="1211" y="810" textLength="28" class="d">Lights</text><text x="1211" y="828" textLength="65" class="d">Environments</text><text x="1211" y="846" textLength="53" class="d">Bake Items</text><text x="1227" y="864" textLength="12" class="d">FX</text>
<text x="1451" y="684" textLength="26" class="d">Alpha</text><text x="1450" y="702" textLength="50" class="d">Final Color</text><text x="1450" y="738" textLength="57" class="d">Full Shading</text><text x="1451" y="756" textLength="17" class="d">(all)</text>
<use href="#dnk" x="1575" y="680"/><use href="#dnk" x="1575" y="698"/><use href="#dnk" x="1575" y="716"/><use href="#dnk" x="1575" y="734"/><use href="#dnk" x="1575" y="752"/>

<!-- right column -->
<rect x="1602" y="102" width="318" height="82" fill="#474747"/>
<text x="1708" y="119" text-anchor="end" class="h" textLength="59">Pass Groups</text><text x="1708" y="140" text-anchor="end" class="h" textLength="33">Passes</text>
<rect class="b" x="1713" y="106" width="201" height="17" rx="6"/><rect class="b" x="1713" y="127" width="201" height="17" rx="6"/>
<path d="M1835.500 106v17M1835.500 127v17" stroke="#3a3a3a"/>
<text x="1734" y="119" class="h" textLength="31">(none)</text><text x="1734" y="140" class="h" textLength="31">(none)</text>
<path d="M1823 113h8l-4 4zM1823 134h8l-4 4z" fill="#8a8a8a"/>
<text x="1863" y="119" textLength="21">New</text><text x="1863" y="140" textLength="21" class="h">New</text>
<path d="M1610 150.500h303" stroke="#2f2f2f"/>
<rect class="b" x="1607" y="155" width="101" height="23" rx="7"/><rect class="b" x="1711" y="155" width="202" height="23" rx="7"/><path d="M1812 155v23" stroke="#383838"/>
<path d="M1623 161.500a6.500 6.500 0 1 0 2 5" fill="none" stroke="#8fe07a" stroke-width="1.800"/><path d="M1618 164v6.500M1614.500 167.500h7" stroke="#8fe07a" stroke-width="1.800"/>
<circle cx="1722" cy="168" r="8" fill="#3a3a3a"/><path d="M1719 162h6v5h3l-6 7-6-7h3z" fill="#a9df8a"/>
<circle cx="1824" cy="168" r="8" fill="#3a3a3a"/><path d="M1820 164l8 8M1828 164l-8 8" stroke="#ef5a5a" stroke-width="2.600"/>
<text x="1630" y="172" textLength="45">Auto Add</text><text x="1734" y="172" textLength="27">Apply</text><text x="1835" y="172" textLength="35">Discard</text>
<rect x="1602" y="184" width="318" height="20" fill="#2a2a2a"/>
<circle cx="1609" cy="196" r="3" fill="#111"/>
<path d="M1619 204q3 0 3-4v-6q0-4 4-4h49q4 0 4 4v10z" fill="#484848"/>
<text x="1624" y="201" class="o" textLength="49">Properties</text>
<path d="M1688 192v7M1684.500 195.500h7" stroke="#999"/>
<use href="#exp" x="1882" y="195"/><use href="#gear" x="1898" y="195"/><use href="#arr" x="1913" y="195"/>
<rect x="1602" y="204" width="318" height="800" fill="#484848"/>
<rect x="1602" y="1004" width="318" height="1" fill="#2e2e2e"/>
<text x="1608" y="1029" style="fill:#aac0d0;font-size:11px">&gt;</text>
<rect x="1622" y="1015" width="265" height="18" rx="5" fill="#8f969d" stroke="#2b2b2b"/>
<text x="1631" y="1029" textLength="47" style="fill:#4a5056">Command</text>
<rect class="b" x="1891" y="1013" width="22" height="23" rx="6"/>
<circle cx="1902" cy="1025" r="5.700" fill="none" stroke="#d06a6e" stroke-width="1.500"/>
<rect x="1917" y="67" width="3" height="973" fill="#3a3a3a"/>
</svg>
</body></html>
